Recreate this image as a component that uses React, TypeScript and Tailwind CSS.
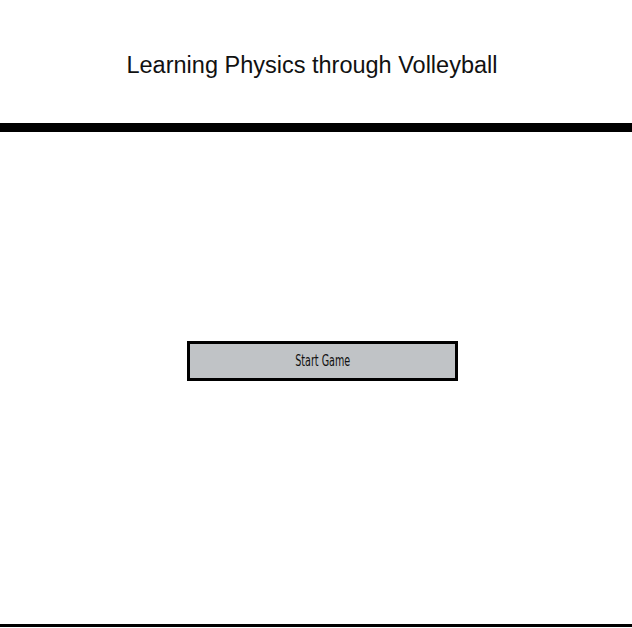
import React from 'react';

export default function App() {
    return (
        <div className="w-[632px] h-[628px] bg-white flex flex-col overflow-hidden" style={{ fontFamily: '"Liberation Sans", Arial, sans-serif' }}>
            {/* Header */}
            <header className="h-[123px] flex items-start justify-center pt-[51px]">
                <h1 className="text-[23.5px] leading-[28px] text-[#111] pr-[8px]">
                    Learning Physics through Volleyball
                </h1>
            </header>
            <div className="h-[9px] bg-black" />

            {/* Main */}
            <main className="flex-1 flex justify-center pt-[209px] border-b-[3px] border-black">
                <button className="w-[271px] h-[40px] bg-[#c0c3c6] border-[3px] border-black text-[#111] ml-[13px] flex items-center justify-center">
                    {/* condensed label */}
                    <span
                        className="inline-block text-[15px] leading-none"
                        style={{ fontFamily: '"Liberation Sans Narrow", "DejaVu Sans Condensed", sans-serif', transform: 'scaleX(0.71)' }}
                    >
                        Start Game
                    </span>
                </button>
            </main>
            <div className="h-[1px]" />
        </div>
    );
}
